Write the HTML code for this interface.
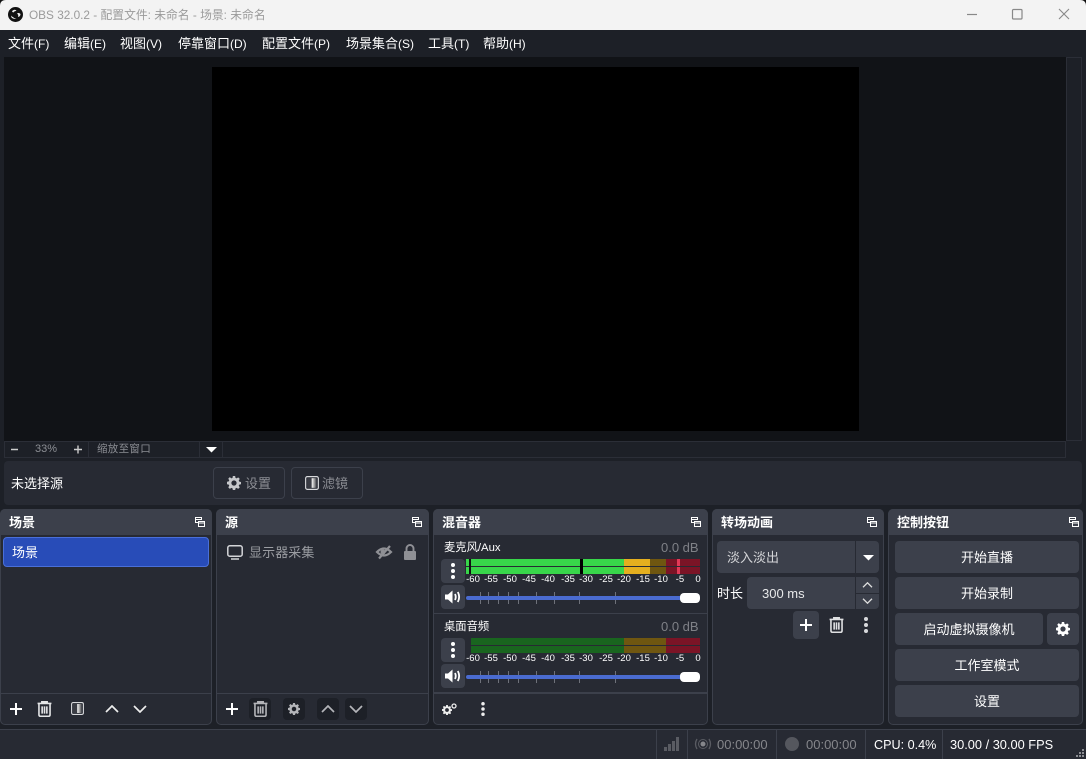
<!DOCTYPE html>
<html><head><meta charset="utf-8">
<style>
html,body{margin:0;padding:0;width:1086px;height:759px;overflow:hidden;background:#1d2027}
body{position:relative;font-family:"Liberation Sans","Noto Sans CJK SC",sans-serif;font-size:13px;color:#fff}
.a{position:absolute;box-sizing:border-box}
.t{position:absolute;white-space:nowrap;line-height:16px;margin-top:1px}
.p{position:absolute;box-sizing:border-box;background:#272a33;border:1px solid #3c404b;border-radius:5px}
.h{position:absolute;box-sizing:border-box;background:#3c404b;border-radius:5px 5px 0 0;height:26px}
.ht{position:absolute;white-space:nowrap;font-weight:700;line-height:16px;font-size:13px;margin-top:1px}
.btn{position:absolute;box-sizing:border-box;background:#3c404b;border-radius:4px;text-align:center;line-height:34px;font-size:13px}
.m{position:absolute;top:36px;line-height:16px;white-space:nowrap;font-size:13px}
.m span{font-size:12px}
.sc{position:absolute;font-size:9.500px;line-height:10px;width:24px;text-align:center;color:#fff}
.tk{position:absolute;width:1px;background:#6e717a}
svg{position:absolute;overflow:visible}
</style></head><body>
<svg width="0" height="0" style="left:0;top:0">
<defs>
<symbol id="dock" viewBox="0 0 10 10"><path d="M.5.5h6v2H.5zM.5 2.500v3h2.500M3.500 4.500h6v5h-6zM3.500 6h6" fill="none" stroke="#fff" stroke-width="1"/></symbol>
<symbol id="gear" viewBox="0 0 16 16"><path fill-rule="evenodd" d="M6.700 0h2.600l.4 2.100 1.300.6 1.800-1.200 1.800 1.800-1.200 1.800.6 1.300 2 .4v2.600l-2 .4-.6 1.300 1.200 1.800-1.800 1.800-1.800-1.200-1.300.6-.4 2.100H6.700l-.4-2.100-1.300-.6-1.800 1.200-1.800-1.800 1.200-1.800-.6-1.300-2-.4V6.600l2-.4.6-1.300-1.200-1.800 1.800-1.800L5 2.700l1.300-.6zM8 5a3 3 0 1 0 0 6 3 3 0 0 0 0-6z"/></symbol>
<symbol id="trash" viewBox="0 0 14 15"><path d="M.5 2.300h13M4.500 2.300V.8h5v1.500M1.800 2.300v10.600q0 1.400 1.400 1.400h7.600q1.400 0 1.400-1.400V2.300M4.800 5v6.800M7 5v6.800M9.200 5v6.800" fill="none" stroke="currentColor" stroke-width="1.500"/></symbol>
<symbol id="plus" viewBox="0 0 14 14"><path d="M7 1v12M1 7h12" fill="none" stroke="currentColor" stroke-width="2"/></symbol>
<symbol id="up" viewBox="0 0 14 8"><path d="M1 7l6-6 6 6" fill="none" stroke="currentColor" stroke-width="1.700"/></symbol>
<symbol id="dn" viewBox="0 0 14 8"><path d="M1 1l6 6 6-6" fill="none" stroke="currentColor" stroke-width="1.700"/></symbol>
<symbol id="dots" viewBox="0 0 4 16"><circle cx="2" cy="2" r="2"/><circle cx="2" cy="8" r="2"/><circle cx="2" cy="14" r="2"/></symbol>
<symbol id="spk" viewBox="0 0 16 14"><path d="M0 4.500h3L7.500 .5v13L3 9.500H0z" fill="#fff"/><path d="M10 4q1.500 3 0 6M12.800 2q2.700 5 0 10" fill="none" stroke="#fff" stroke-width="1.800"/></symbol>
<linearGradient id="fg" x1="0" x2="1" y1="0" y2="0"><stop offset="0" stop-color="#3a3c44"/><stop offset=".42" stop-color="#3a3c44"/><stop offset=".5" stop-color="#f0f0f0"/><stop offset=".7" stop-color="#b0b0b0"/><stop offset="1" stop-color="#33353c"/></linearGradient>
<symbol id="filter" viewBox="0 0 13 13"><rect x=".6" y=".6" width="11.800" height="11.800" rx="1.500" fill="#272a33" stroke="#d8d9dc" stroke-width="1.100"/><rect x="2" y="2" width="9" height="9" fill="url(#fg)"/></symbol>
</defs></svg>

<!-- title bar -->
<div class="a" style="left:0;top:0;width:1086px;height:30px;background:#f3f3f3"></div>
<div class="a" style="left:0;top:0;width:6px;height:6px;background:#111;clip-path:path('M0 0H6Q0 0 0 6Z')"></div>
<div class="a" style="left:1080px;top:0;width:6px;height:6px;background:#111;clip-path:path('M0 0H6V6Q6 0 0 0Z')"></div>
<svg style="left:8px;top:7px" width="15" height="15" viewBox="0 0 30 30"><circle cx="15" cy="15" r="15" fill="#111"/><path d="M8 9a5 5 0 0 1 9-1 6 6 0 0 0-6 3 5 5 0 0 1-3-2zM25 14a6 6 0 0 1-5 6 6 6 0 0 0-2-7 5 5 0 0 1 7 1zM6 17a6 6 0 0 0 4 6 6 6 0 0 0 7-1 6 6 0 0 1-7-2 5 5 0 0 1-4-3z" fill="#eee"/></svg>
<div class="t" style="left:29px;top:7px;margin-top:0;color:#9a9a9a;font-size:11.800px">OBS 32.0.2 - 配置文件: 未命名 - 场景: 未命名</div>
<svg style="left:967px;top:8px" width="110" height="14"><path d="M0 6.500h10" stroke="#888" stroke-width="1.200"/><rect x="45.500" y="1.500" width="9.500" height="9.500" rx="1" fill="none" stroke="#888" stroke-width="1.200"/><path d="M92 1l10 10M102 1l-10 10" stroke="#888" stroke-width="1.100"/></svg>

<!-- menu -->
<div class="m" style="left:8px">文件<span>(F)</span></div>
<div class="m" style="left:64px">编辑<span>(E)</span></div>
<div class="m" style="left:120px">视图<span>(V)</span></div>
<div class="m" style="left:178px">停靠窗口<span>(D)</span></div>
<div class="m" style="left:262px">配置文件<span>(P)</span></div>
<div class="m" style="left:346px">场景集合<span>(S)</span></div>
<div class="m" style="left:428px">工具<span>(T)</span></div>
<div class="m" style="left:483px">帮助<span>(H)</span></div>

<!-- preview -->
<div class="a" style="left:4px;top:57px;width:1062px;height:384px;background:#111317"></div>
<div class="a" style="left:212px;top:67px;width:647px;height:364px;background:#000"></div>
<div class="a" style="left:1066px;top:57px;width:16px;height:384px;background:#1d2027;border:1px solid #2b2e37"></div>
<div class="a" style="left:4px;top:441px;width:1062px;height:17px;background:#1d2027;border:1px solid #2b2e37"></div>
<div class="a" style="left:88px;top:441px;width:1px;height:17px;background:#2b2e37"></div>
<div class="a" style="left:199px;top:441px;width:1px;height:17px;background:#2b2e37"></div>
<div class="a" style="left:222px;top:441px;width:1px;height:17px;background:#2b2e37"></div>
<svg style="left:10px;top:445px" width="75" height="10"><path d="M1 4.500h7M64 4.500h8M68 .5v8" stroke="#ccc" stroke-width="1.400"/></svg>
<div class="t" style="left:35px;top:441px;margin-top:0;font-size:11px;color:#8c8e94">33%</div>
<div class="t" style="left:97px;top:441px;margin-top:0;font-size:10.500px;color:#8c8e94;letter-spacing:.3px">缩放至窗口</div>
<svg style="left:206px;top:447px" width="11" height="6"><path d="M0 0h11L5.500 5.500z" fill="#fff"/></svg>

<!-- context bar -->
<div class="a" style="left:4px;top:461px;width:1078px;height:44px;background:#272a33;border-radius:4px"></div>
<div class="t" style="left:11px;top:475px">未选择源</div>
<div class="a" style="left:213px;top:467px;width:72px;height:32px;border:1px solid #3c404b;border-radius:4px"></div>
<svg style="left:227px;top:476px;fill:#c6c7ca" width="14" height="14"><use href="#gear"/></svg>
<div class="t" style="left:245px;top:475px;color:#8c8e94">设置</div>
<div class="a" style="left:291px;top:467px;width:72px;height:32px;border:1px solid #3c404b;border-radius:4px"></div>
<svg style="left:305px;top:476px" width="14" height="14"><use href="#filter"/></svg>
<div class="t" style="left:322px;top:475px;color:#8c8e94">滤镜</div>

<!-- scenes -->
<div class="p" style="left:0;top:509px;width:212px;height:216px"></div>
<div class="h" style="left:0;top:509px;width:212px"></div>
<div class="ht" style="left:9px;top:514px">场景</div>
<svg style="left:195px;top:517px" width="10" height="10"><use href="#dock"/></svg>
<div class="a" style="left:3px;top:537px;width:206px;height:30px;background:#284cb8;border:1px solid #4a6fd8;border-radius:4px"></div>
<div class="t" style="left:12px;top:544px">场景</div>
<div class="a" style="left:1px;top:693px;width:210px;height:1px;background:#3c404b"></div>
<svg style="left:9px;top:702px;color:#fff" width="14" height="14"><use href="#plus"/></svg>
<svg style="left:37px;top:701px;color:#e4e5e7" width="15" height="16"><use href="#trash"/></svg>
<svg style="left:71px;top:702px" width="13" height="13"><use href="#filter"/></svg>
<svg style="left:105px;top:705px;color:#eee" width="14" height="8"><use href="#up"/></svg>
<svg style="left:133px;top:705px;color:#eee" width="14" height="8"><use href="#dn"/></svg>

<!-- sources -->
<div class="p" style="left:216px;top:509px;width:213px;height:216px"></div>
<div class="h" style="left:216px;top:509px;width:213px"></div>
<div class="ht" style="left:225px;top:514px">源</div>
<svg style="left:412px;top:517px" width="10" height="10"><use href="#dock"/></svg>
<svg style="left:227px;top:545px" width="16" height="15"><rect x=".8" y=".8" width="14.400" height="10.400" rx="2" fill="none" stroke="#d4d5d8" stroke-width="1.500"/><path d="M4 14h8" stroke="#d4d5d8" stroke-width="1.500"/></svg>
<div class="t" style="left:249px;top:544px;color:#9b9da2;letter-spacing:.1px">显示器采集</div>
<svg style="left:376px;top:545px" width="16" height="14"><path d="M1 7q7-7 14 0-7 7-14 0z" fill="none" stroke="#8f9095" stroke-width="2.200"/><circle cx="7" cy="7" r="2.500" fill="#8f9095"/><path d="M3 13.500L14 1" stroke="#8f9095" stroke-width="2.200"/></svg>
<svg style="left:403px;top:544px" width="14" height="16"><rect x="1" y="7" width="12" height="9" rx="1" fill="#8f9095"/><path d="M3.500 8V4.500a3.500 3.500 0 0 1 7 0V8" fill="none" stroke="#8f9095" stroke-width="1.900"/></svg>
<div class="a" style="left:217px;top:693px;width:211px;height:1px;background:#3c404b"></div>
<svg style="left:225px;top:702px;color:#fff" width="14" height="14"><use href="#plus"/></svg>
<div class="a" style="left:249px;top:698px;width:22px;height:22px;background:#1d2027;border-radius:4px"></div>
<svg style="left:253px;top:701px;color:#b4b5b9" width="15" height="16"><use href="#trash"/></svg>
<div class="a" style="left:283px;top:698px;width:22px;height:22px;background:#1d2027;border-radius:4px"></div>
<svg style="left:288px;top:703px;fill:#b4b5b9" width="12" height="12"><use href="#gear"/></svg>
<div class="a" style="left:317px;top:698px;width:22px;height:22px;background:#1d2027;border-radius:4px"></div>
<svg style="left:321px;top:705px;color:#b4b5b9" width="14" height="8"><use href="#up"/></svg>
<div class="a" style="left:345px;top:698px;width:22px;height:22px;background:#1d2027;border-radius:4px"></div>
<svg style="left:349px;top:705px;color:#b4b5b9" width="14" height="8"><use href="#dn"/></svg>

<!-- mixer -->
<div class="p" style="left:433px;top:509px;width:275px;height:216px"></div>
<div class="h" style="left:433px;top:509px;width:275px"></div>
<div class="ht" style="left:442px;top:514px">混音器</div>
<svg style="left:691px;top:517px" width="10" height="10"><use href="#dock"/></svg>

<div class="t" style="left:444px;top:539px;font-size:11.300px">麦克风/Aux</div>
<div class="t" style="left:661px;top:539px;color:#7f8187;font-size:13px">0.0 dB</div>
<div class="btn" style="left:441px;top:559px;width:24px;height:24px"></div>
<svg style="left:451px;top:563px;fill:#fff" width="4" height="16"><use href="#dots"/></svg>
<div class="btn" style="left:441px;top:585px;width:24px;height:24px"></div>
<svg style="left:445px;top:590px" width="16" height="14"><use href="#spk"/></svg>
<!-- meter 1 -->
<div class="a" style="left:466px;top:559px;width:158px;height:7px;background:#38d64a"></div>
<div class="a" style="left:466px;top:567px;width:158px;height:7px;background:#38d64a"></div>
<div class="a" style="left:624px;top:559px;width:26px;height:7px;background:#e4af1f"></div>
<div class="a" style="left:624px;top:567px;width:26px;height:7px;background:#e4af1f"></div>
<div class="a" style="left:650px;top:559px;width:16px;height:7px;background:#6f5610"></div>
<div class="a" style="left:650px;top:567px;width:16px;height:7px;background:#6f5610"></div>
<div class="a" style="left:666px;top:559px;width:34px;height:7px;background:#7b1426"></div>
<div class="a" style="left:666px;top:567px;width:34px;height:7px;background:#7b1426"></div>
<div class="a" style="left:469px;top:559px;width:2px;height:15px;background:#111"></div>
<div class="a" style="left:580px;top:559px;width:3px;height:15px;background:#000"></div>
<div class="a" style="left:677px;top:559px;width:3px;height:15px;background:#e23a58"></div>
<div class="a" style="left:677px;top:566px;width:3px;height:1px;background:#272a33"></div>
<div class="sc" style="left:461px;top:575px">-60</div><div class="sc" style="left:479px;top:575px">-55</div><div class="sc" style="left:498px;top:575px">-50</div><div class="sc" style="left:517px;top:575px">-45</div><div class="sc" style="left:536px;top:575px">-40</div><div class="sc" style="left:556px;top:575px">-35</div><div class="sc" style="left:574px;top:575px">-30</div><div class="sc" style="left:594px;top:575px">-25</div><div class="sc" style="left:612px;top:575px">-20</div><div class="sc" style="left:631px;top:575px">-15</div><div class="sc" style="left:649px;top:575px">-10</div><div class="sc" style="left:668px;top:575px">-5</div><div class="sc" style="left:686px;top:575px">0</div>
<!-- slider 1 -->
<div class="tk" style="left:480px;top:592px;height:12px"></div><div class="tk" style="left:488px;top:592px;height:12px"></div><div class="tk" style="left:498px;top:592px;height:12px"></div><div class="tk" style="left:508px;top:592px;height:12px"></div><div class="tk" style="left:518px;top:592px;height:12px"></div><div class="tk" style="left:536px;top:592px;height:12px"></div><div class="tk" style="left:554px;top:592px;height:12px"></div><div class="tk" style="left:579px;top:592px;height:12px"></div><div class="tk" style="left:615px;top:592px;height:12px"></div>
<div class="a" style="left:466px;top:596px;width:216px;height:4px;background:#4a6bd0;border-radius:2px"></div>
<div class="a" style="left:680px;top:593px;width:20px;height:10px;background:#fff;border-radius:4px"></div>
<div class="a" style="left:434px;top:613px;width:273px;height:1px;background:#3c404b"></div>

<div class="t" style="left:444px;top:618px;font-size:11.300px">桌面音频</div>
<div class="t" style="left:661px;top:618px;color:#7f8187;font-size:13px">0.0 dB</div>
<div class="btn" style="left:441px;top:638px;width:24px;height:24px"></div>
<svg style="left:451px;top:642px;fill:#fff" width="4" height="16"><use href="#dots"/></svg>
<div class="btn" style="left:441px;top:664px;width:24px;height:24px"></div>
<svg style="left:445px;top:669px" width="16" height="14"><use href="#spk"/></svg>
<!-- meter 2 -->
<div class="a" style="left:471px;top:638px;width:153px;height:7px;background:#19651f"></div>
<div class="a" style="left:471px;top:646px;width:153px;height:7px;background:#19651f"></div>
<div class="a" style="left:624px;top:638px;width:42px;height:7px;background:#6f5610"></div>
<div class="a" style="left:624px;top:646px;width:42px;height:7px;background:#6f5610"></div>
<div class="a" style="left:666px;top:638px;width:34px;height:7px;background:#7b1426"></div>
<div class="a" style="left:666px;top:646px;width:34px;height:7px;background:#7b1426"></div>
<div class="sc" style="left:461px;top:654px">-60</div><div class="sc" style="left:479px;top:654px">-55</div><div class="sc" style="left:498px;top:654px">-50</div><div class="sc" style="left:517px;top:654px">-45</div><div class="sc" style="left:536px;top:654px">-40</div><div class="sc" style="left:556px;top:654px">-35</div><div class="sc" style="left:574px;top:654px">-30</div><div class="sc" style="left:594px;top:654px">-25</div><div class="sc" style="left:612px;top:654px">-20</div><div class="sc" style="left:631px;top:654px">-15</div><div class="sc" style="left:649px;top:654px">-10</div><div class="sc" style="left:668px;top:654px">-5</div><div class="sc" style="left:686px;top:654px">0</div>
<!-- slider 2 -->
<div class="tk" style="left:480px;top:671px;height:12px"></div><div class="tk" style="left:488px;top:671px;height:12px"></div><div class="tk" style="left:498px;top:671px;height:12px"></div><div class="tk" style="left:508px;top:671px;height:12px"></div><div class="tk" style="left:518px;top:671px;height:12px"></div><div class="tk" style="left:536px;top:671px;height:12px"></div><div class="tk" style="left:554px;top:671px;height:12px"></div><div class="tk" style="left:579px;top:671px;height:12px"></div><div class="tk" style="left:615px;top:671px;height:12px"></div>
<div class="a" style="left:466px;top:675px;width:216px;height:4px;background:#4a6bd0;border-radius:2px"></div>
<div class="a" style="left:680px;top:672px;width:20px;height:10px;background:#fff;border-radius:4px"></div>
<div class="a" style="left:434px;top:692px;width:273px;height:2px;background:#3c404b"></div>
<svg style="left:442px;top:705px;fill:#eee" width="10" height="10"><use href="#gear"/></svg>
<svg style="left:451px;top:703px" width="6" height="6"><circle cx="3" cy="3" r="2" fill="none" stroke="#eee" stroke-width="1.300"/></svg>
<svg style="left:481px;top:702px;fill:#eee" width="4" height="14"><use href="#dots"/></svg>

<!-- transitions -->
<div class="p" style="left:712px;top:509px;width:172px;height:216px"></div>
<div class="h" style="left:712px;top:509px;width:172px"></div>
<div class="ht" style="left:721px;top:514px">转场动画</div>
<svg style="left:867px;top:517px" width="10" height="10"><use href="#dock"/></svg>
<div class="a" style="left:717px;top:541px;width:162px;height:32px;background:#3c404b;border-radius:4px"></div>
<div class="t" style="left:727px;top:549px;color:#d4d5d8">淡入淡出</div>
<div class="a" style="left:855px;top:541px;width:1px;height:32px;background:#272a33"></div>
<svg style="left:863px;top:555px" width="11" height="6"><path d="M0 0h11L5.500 5.500z" fill="#fff"/></svg>
<div class="t" style="left:717px;top:585px">时长</div>
<div class="a" style="left:747px;top:577px;width:132px;height:32px;background:#3c404b;border-radius:4px"></div>
<div class="t" style="left:762px;top:585px;color:#e8e9ea">300 ms</div>
<div class="a" style="left:855px;top:577px;width:1px;height:32px;background:#272a33"></div>
<div class="a" style="left:855px;top:593px;width:24px;height:1px;background:#272a33"></div>
<svg style="left:862px;top:582px;color:#ddd" width="11" height="6"><use href="#up"/></svg>
<svg style="left:862px;top:598px;color:#ddd" width="11" height="6"><use href="#dn"/></svg>
<div class="a" style="left:793px;top:611px;width:26px;height:28px;background:#3c404b;border-radius:4px"></div>
<svg style="left:799px;top:618px;color:#fff" width="14" height="14"><use href="#plus"/></svg>
<svg style="left:829px;top:617px;color:#e0e1e3" width="15" height="16"><use href="#trash"/></svg>
<svg style="left:864px;top:617px;fill:#d8d9dc" width="4" height="16"><use href="#dots"/></svg>

<!-- controls -->
<div class="p" style="left:888px;top:509px;width:195px;height:216px"></div>
<div class="h" style="left:888px;top:509px;width:195px"></div>
<div class="ht" style="left:897px;top:514px">控制按钮</div>
<svg style="left:1069px;top:517px" width="10" height="10"><use href="#dock"/></svg>
<div class="btn" style="left:895px;top:541px;width:184px;height:32px">开始直播</div>
<div class="btn" style="left:895px;top:577px;width:184px;height:32px">开始录制</div>
<div class="btn" style="left:895px;top:613px;width:148px;height:32px">启动虚拟摄像机</div>
<div class="btn" style="left:1047px;top:613px;width:32px;height:32px"></div>
<svg style="left:1056px;top:622px;fill:#fff" width="14" height="14"><use href="#gear"/></svg>
<div class="btn" style="left:895px;top:649px;width:184px;height:32px">工作室模式</div>
<div class="btn" style="left:895px;top:685px;width:184px;height:32px">设置</div>

<!-- status bar -->
<div class="a" style="left:0;top:729px;width:1086px;height:30px;background:#272a33;border-top:1px solid #3c404b"></div>
<div class="a" style="left:656px;top:730px;width:1px;height:29px;background:#3c404b"></div>
<div class="a" style="left:687px;top:730px;width:1px;height:29px;background:#3c404b"></div>
<div class="a" style="left:776px;top:730px;width:1px;height:29px;background:#3c404b"></div>
<div class="a" style="left:865px;top:730px;width:1px;height:29px;background:#3c404b"></div>
<div class="a" style="left:942px;top:730px;width:1px;height:29px;background:#3c404b"></div>
<svg style="left:664px;top:737px" width="16" height="14"><path d="M0 10h3v4H0zM4 7h3v7H4zM8 4h3v10H8zM12 0h3v14h-3z" fill="#5a5c63"/></svg>
<svg style="left:695px;top:737px" width="16" height="14"><circle cx="8" cy="7" r="2.500" fill="#85868b"/><circle cx="8" cy="7" r="4.500" fill="none" stroke="#5a5c63" stroke-width="1"/><path d="M2 2q-3 5 0 10M14 2q3 5 0 10" fill="none" stroke="#5a5c63" stroke-width="1.300"/></svg>
<div class="t" style="left:717px;top:736px;color:#85868b">00:00:00</div>
<div class="a" style="left:785px;top:737px;width:14px;height:14px;border-radius:50%;background:#55575e"></div>
<div class="t" style="left:806px;top:736px;color:#85868b">00:00:00</div>
<div class="t" style="left:874px;top:736px;font-size:12.600px">CPU: 0.4%</div>
<div class="t" style="left:950px;top:736px;font-size:12.800px">30.00 / 30.00 FPS</div>
<svg style="left:1076px;top:749px" width="9" height="9"><path d="M6 0h2v2H6zM3 3h2v2H3zM6 3h2v2H6zM0 6h2v2H0zM3 6h2v2H3zM6 6h2v2H6z" fill="#8b8d92"/></svg>
</body></html>
